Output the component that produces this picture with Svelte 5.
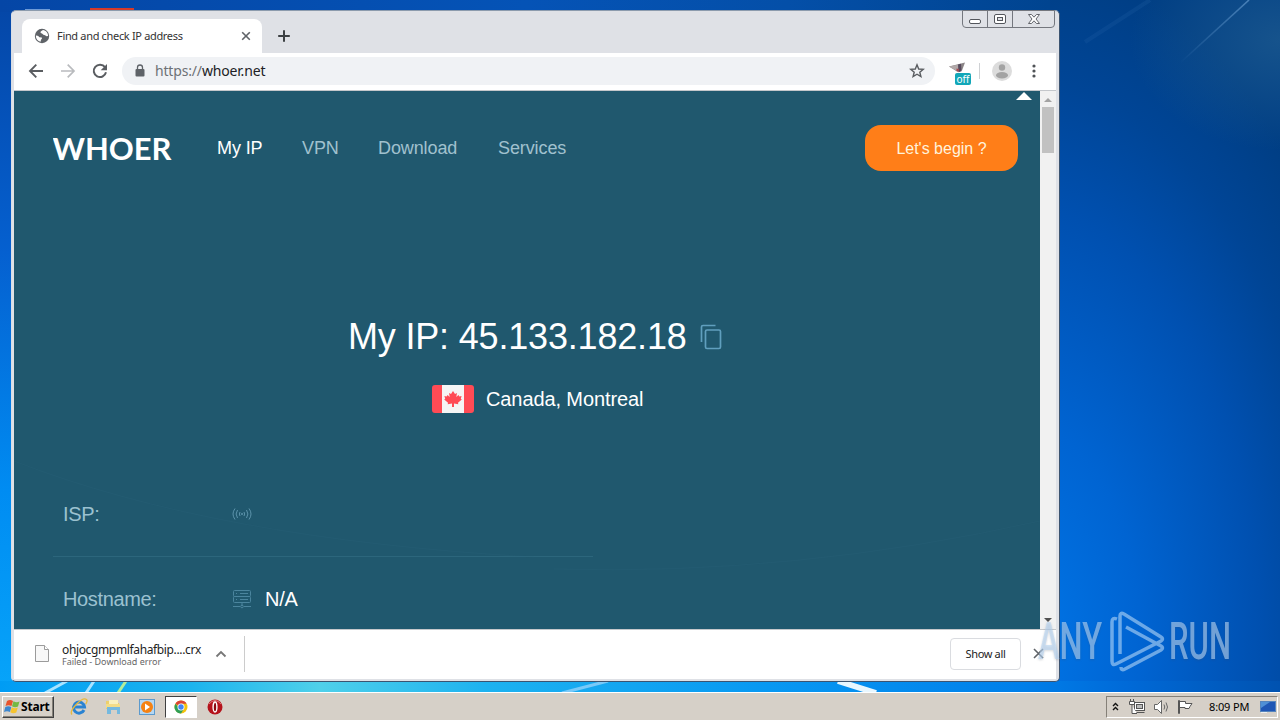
<script>
  const nav = [
    { label: "My IP", width: 45, active: true },
    { label: "VPN", width: 36 },
    { label: "Download", width: 80 },
    { label: "Services", width: 69 },
  ];
</script>

<div class="desktop">
  <svg class="wallpaper" viewBox="0 0 1280 720">
    <defs>
      <linearGradient id="sky" x1="0" y1="0" x2="0" y2="1">
        <stop offset="0" stop-color="#0546a6" />
        <stop offset="0.35" stop-color="#0560d0" />
        <stop offset="0.68" stop-color="#008cf2" />
        <stop offset="1" stop-color="#08a8fa" />
      </linearGradient>
      <linearGradient id="top" x1="0" y1="0" x2="1" y2="0">
        <stop offset="0" stop-color="#0546a6" />
        <stop offset="0.5" stop-color="#0553b6" />
        <stop offset="0.75" stop-color="#044fa8" />
        <stop offset="1" stop-color="#004490" />
      </linearGradient>
      <radialGradient id="side" gradientUnits="userSpaceOnUse" cx="0" cy="0" r="1" gradientTransform="translate(1020 640) scale(400 720)">
        <stop offset="0" stop-color="#0076e8" />
        <stop offset="0.3" stop-color="#0064d2" />
        <stop offset="0.6" stop-color="#0050b0" />
        <stop offset="0.78" stop-color="#004596" />
        <stop offset="0.95" stop-color="#003e84" />
      </radialGradient>
      <linearGradient id="base" x1="0" y1="0" x2="1" y2="0">
        <stop offset="0" stop-color="#009cf4" />
        <stop offset="0.15" stop-color="#1cb4ee" />
        <stop offset="0.25" stop-color="#4fd0ea" />
        <stop offset="0.38" stop-color="#1db2f0" />
        <stop offset="0.6" stop-color="#0898f2" />
        <stop offset="0.8" stop-color="#007fea" />
        <stop offset="0.88" stop-color="#006ad8" />
        <stop offset="1" stop-color="#0052b0" />
      </linearGradient>
      <radialGradient id="haze">
        <stop offset="0" stop-color="#2c6894" stop-opacity="0.5" />
        <stop offset="1" stop-color="#2c6894" stop-opacity="0" />
      </radialGradient>
      <linearGradient id="ray" gradientUnits="userSpaceOnUse" x1="1180" y1="63" x2="1250" y2="0">
        <stop offset="0" stop-color="#5d93c8" stop-opacity="0" />
        <stop offset="1" stop-color="#5d93c8" stop-opacity="0.75" />
      </linearGradient>
    </defs>
    <rect width="1280" height="720" fill="url(#sky)" />
    <rect width="1050" height="12" fill="url(#top)" />
    <rect x="1050" width="230" height="720" fill="url(#side)" />
    <ellipse cx="1280" cy="40" rx="150" ry="110" fill="url(#haze)" />
    <path d="M1180 63 1249 0" stroke="url(#ray)" stroke-width="1.6" />
    <path d="M1085 42 1150 0" stroke="#2a68ac" stroke-width="4" opacity="0.2" />
    <rect y="681" width="1280" height="12" fill="url(#base)" />
    <path d="M45 693 67 681M86 693 94 681" stroke="#a9e3ff" stroke-width="3" />
    <path d="M118 693 126 681" stroke="#b4ed9b" stroke-width="3" />
    <path d="M562 693 608 681" stroke="#79c9f8" stroke-width="3" />
    <path d="M838 681 876 693" stroke="#e8f7ff" stroke-width="6" />
    <rect x="90" y="8" width="44" height="3" fill="#d63a29" />
    <rect x="25" y="9" width="25" height="2" fill="#6f9bd7" />
  </svg>

  <div class="window">
    <div class="tabstrip">
      <div class="tab">
        <svg width="16" height="16" viewBox="0 0 16 16">
          <circle cx="8" cy="8" r="7.200" fill="#5f6368" />
          <path d="M1.800 7.500c2-.2 3 .8 3.600 1.800l2.400.3c.6.900-.2 1.600-.8 2.100l-.4 2.100C3.800 13.300 1.900 11 1.800 7.500zM9 2C8 3 6.500 2.900 6.500 4.200 6.500 5.400 8 5 8.600 6c.8 1.400 2.600.6 3.900 2.300l1.600-.3C14.200 5 12 2.500 9 2z" fill="#fff" />
        </svg>
        <span class="tab-title">Find and check IP address</span>
        <svg class="tab-close" width="10" height="10" viewBox="0 0 10 10">
          <path d="m1.200 1.200 7.600 7.600m0-7.600L1.200 8.800" stroke="#5f6368" stroke-width="1.600" />
        </svg>
      </div>
      <svg class="new-tab" width="14" height="14" viewBox="0 0 14 14">
        <path d="M7 1.200v11.600M1.200 7h11.600" stroke="#3c4043" stroke-width="2" />
      </svg>
      <div class="controls">
        <span>
          <svg width="24" height="16" viewBox="0 0 24 16">
            <rect x="6.500" y="8.500" width="11" height="4" rx="1.500" fill="#fff" stroke="#53565c" />
          </svg>
        </span>
        <span>
          <svg width="24" height="16" viewBox="0 0 24 16">
            <rect x="6.500" y="3.500" width="11" height="9" rx="1.500" fill="#fff" stroke="#53565c" />
            <rect x="9.500" y="6.500" width="5" height="3" fill="#dfe1e6" stroke="#53565c" />
          </svg>
        </span>
        <span class="wide">
          <svg width="24" height="16" viewBox="0 0 24 16">
            <path d="M6.500 3.500h3l2.500 2.700 2.500-2.700h3L14 8l3.500 4.500h-3L12 9.800l-2.500 2.700h-3L10 8z" fill="#fff" stroke="#53565c" stroke-width=".9" />
          </svg>
        </span>
      </div>
    </div>

    <div class="toolbar">
      <svg width="16" height="16" viewBox="0 0 16 16" fill="none" stroke="#5a5d61" stroke-width="1.900">
        <path d="M15 8H2M8.300 1.700 2 8l6.300 6.300" />
      </svg>
      <svg width="16" height="16" viewBox="0 0 16 16" fill="none" stroke="#b9bbbe" stroke-width="1.700">
        <path d="M1 8h13M7.700 1.700 14 8l-6.300 6.300" />
      </svg>
      <svg width="16" height="16" viewBox="0 0 16 16">
        <path d="M13 4.200A6.200 6.200 0 1 0 14 9.300" fill="none" stroke="#5a5d61" stroke-width="2" />
        <path d="M15 1v6.300H8.700z" fill="#5a5d61" />
      </svg>
      <div class="omnibox">
        <svg width="10" height="14" viewBox="0 0 10 14">
          <rect x=".5" y="5" width="9" height="7.500" rx="1" fill="#5f6368" />
          <path d="M2.500 5V3.500a2.500 2.500 0 0 1 5 0V5" fill="none" stroke="#5f6368" stroke-width="1.300" />
        </svg>
        <span class="url"><span class="scheme">https://</span>whoer.net</span>
        <svg class="star" width="16" height="16" viewBox="0 0 16 16">
          <path d="m8 1.800 1.700 4.200 4.600.3-3.500 2.900 1.100 4.400L8 11.200l-3.900 2.400 1.100-4.400-3.500-2.900 4.600-.3z" fill="none" stroke="#5a5d61" stroke-width="1.400" />
        </svg>
      </div>
      <div class="extension">
        <svg width="18" height="14" viewBox="0 0 18 14">
          <path d="M0 4.500 16 .5l-3 8-5 1z" fill="#8b8587" />
          <path d="m0 4.500 10-2-1 7z" fill="#b2a9a9" />
          <path d="m9 2.500 3-.7.500 7.500-3 1z" fill="#56495c" />
          <path d="m7.500 6.500 2.500.5-.5 3-2-1z" fill="#a64a51" />
        </svg>
        <span class="badge">off</span>
      </div>
      <i class="divider"></i>
      <svg class="avatar" width="20" height="20" viewBox="0 0 20 20">
        <circle cx="10" cy="10" r="10" fill="#dcdcdc" />
        <circle cx="10" cy="6.500" r="3.200" fill="#a3a3a3" />
        <ellipse cx="10" cy="14.200" rx="6" ry="3.200" fill="#a3a3a3" />
      </svg>
      <svg class="menu" width="4" height="14" viewBox="0 0 4 14" fill="#505357">
        <circle cx="2" cy="2" r="1.600" /><circle cx="2" cy="7" r="1.600" /><circle cx="2" cy="12" r="1.600" />
      </svg>
    </div>

    <div class="viewport">
      <main>
        <svg class="swirl" viewBox="0 0 1026 538" fill="none" stroke="#2a657b">
          <path d="M0 370Q200 448 520 466" opacity=".25" />
          <path d="M540 478Q780 485 1026 430" opacity=".25" />
        </svg>
        <svg class="up" width="16" height="8" viewBox="0 0 16 8"><path d="m0 8 8-8 8 8z" fill="#fff" /></svg>
        <header>
          <svg class="brand" width="119" height="40" viewBox="0 0 119 40">
            <text x="-0.5" y="31.500" textLength="119" lengthAdjust="spacingAndGlyphs">WHOER</text>
          </svg>
          <nav>
            {#each nav as item}
              <a href="#top" class:active={item.active} style="width: {item.width}px">{item.label}</a>
            {/each}
          </nav>
          <button class="begin">Let's begin ?</button>
        </header>
        <section class="hero">
          <h1>
            <span>My IP: 45.133.182.18</span>
            <svg width="22" height="26" viewBox="0 0 22 26" fill="none" stroke="#609fbe" stroke-width="1.700">
              <path d="M1.500 18V3q0-1.500 1.500-1.500h12.500" />
              <rect x="5.500" y="6" width="15" height="18.500" rx="1.500" />
            </svg>
          </h1>
          <div class="place">
            <svg width="42" height="28" viewBox="0 0 42 28">
              <rect width="42" height="28" rx="3" fill="#ff4b55" />
              <path d="M10 0h22v28H10z" fill="#f5f5f5" />
              <path d="m21 6 2 3 2-1-.7 4 2.200-2 .8 1.500 2.300-.5-.8 2.800 1 .7-3.800 3.200.3 1.500-4.300-.6V22h-2v-3.400l-4.300.6.3-1.500-3.800-3.200 1-.7-.8-2.800 2.300.5.800-1.500 2.200 2L17 8l2 1z" fill="#ff4b55" />
            </svg>
            <span>Canada, Montreal</span>
          </div>
        </section>
        <dl>
          <div class="row">
            <dt>ISP:</dt>
            <dd>
              <svg width="20" height="14" viewBox="0 0 20 14" fill="none" stroke="#5c93ab" stroke-width="1">
                <path d="M3 1.500q-4 5.500 0 11M5.500 3q-2.800 4 0 8M8 5q-1.200 2 0 4M12 5q1.200 2 0 4M14.500 3q2.800 4 0 8M17 1.500q4 5.500 0 11" />
                <circle cx="10" cy="7" r=".7" />
              </svg>
            </dd>
          </div>
          <div class="row">
            <dt>Hostname:</dt>
            <dd>
              <svg width="20" height="20" viewBox="0 0 20 20" fill="none" stroke="#4b859e" stroke-width="1">
                <rect x="1.500" y="1.500" width="17" height="6" rx="1" />
                <rect x="1.500" y="7.500" width="17" height="6" rx="1" />
                <path d="M4 4.500h1M4 10.500h1M8 4.500h8M8 10.500h8M10 13.500V17M1 17.500h7M12 17.500h7" />
                <circle cx="10" cy="17.500" r="1.300" />
              </svg>
              <span>N/A</span>
            </dd>
          </div>
        </dl>
      </main>
      <div class="scrollbar">
        <svg width="16" height="16" viewBox="0 0 16 16"><path d="m4 11 4-4 4 4z" fill="#a3a3a3" /></svg>
        <div class="thumb"></div>
        <svg class="down" width="16" height="16" viewBox="0 0 16 16"><path d="m4 5 4 4 4-4z" fill="#505050" /></svg>
      </div>
    </div>

    <div class="downloads">
      <svg width="14" height="17" viewBox="0 0 14 17">
        <path d="M.5.500h9l4 4v12H.5z" fill="#f8f8f8" stroke="#9b9b9b" />
        <path d="M9.500.500v4h4" fill="#fff" stroke="#9b9b9b" />
      </svg>
      <div class="file">
        <span class="name">ohjocgmpmlfahafbip....crx</span>
        <span class="status">Failed - Download error</span>
      </div>
      <svg class="chevron" width="12" height="8" viewBox="0 0 12 8">
        <path d="m1.500 6.500 4.500-4.500 4.500 4.500" fill="none" stroke="#777" stroke-width="1.800" />
      </svg>
      <button class="show-all">Show all</button>
      <svg class="close-bar" width="11" height="11" viewBox="0 0 11 11">
        <path d="m1 1 9 9m0-9-9 9" stroke="#5f6368" stroke-width="1.600" />
      </svg>
    </div>
  </div>

  <svg class="watermark" width="220" height="76" viewBox="0 0 220 76">
    <g class="letters">
      <text x="3" y="53" textLength="64" lengthAdjust="spacingAndGlyphs">ANY</text>
      <text x="134" y="53" textLength="62" lengthAdjust="spacingAndGlyphs">RUN</text>
    </g>
    <path d="M82 13q-5-2-5 3v39q0 5 4 3l45-23q3-2 0-4L89 8q-4-2-4 2v38M91 21l35 19q3 2 0 4L90 63q-4 2-4-2" fill="none" stroke="#b4d7f7" stroke-opacity=".6" stroke-width="3.500" />
  </svg>

  <div class="taskbar">
    <button class="start">
      <svg width="16" height="16" viewBox="0 0 16 16">
        <path d="M3 2q3-2 6 0L7.500 7q-3-1.500-6 0z" fill="#e8532c" />
        <path d="M9.500 2.300q3 1.600 6 .2L14 7.500q-3 1.400-6-.2z" fill="#75b943" />
        <path d="M1.300 8q3-1.700 6 0L6 13q-3-1.600-6 0z" fill="#3c87cf" />
        <path d="M7.800 8.300q3 1.600 6 .2L12.300 13.500q-3 1.400-6-.2z" fill="#f6c430" />
      </svg>
      <span>Start</span>
    </button>
    <div class="launch">
      <span class="app">
        <svg width="18" height="18" viewBox="0 0 18 18">
          <path d="M14 12A5.500 5.500 0 1 1 14.500 9H5" fill="none" stroke="#2a83d2" stroke-width="3" />
          <path d="M2 16.500C-1.500 13 12-1.500 16.500 1.500c1 1 .3 3-.8 4.500" fill="none" stroke="#e8b93b" stroke-width="1.300" />
        </svg>
      </span>
      <span class="app">
        <svg width="18" height="18" viewBox="0 0 18 18">
          <path d="M2 3h5l1 2h7v6H2z" fill="#edcf6c" />
          <path d="M5 2h9v6H5z" fill="#f8f0bd" />
          <path d="M2 6h14v4H2z" fill="#f2dc87" />
          <path d="M3 9h13v7h-3v-4H7v4H3z" fill="#75b9df" />
        </svg>
      </span>
      <span class="app">
        <svg width="18" height="18" viewBox="0 0 18 18">
          <rect x="1.500" y="1.500" width="15" height="15" fill="#b5d7f2" stroke="#5c9acd" />
          <circle cx="9" cy="9" r="6" fill="#f58213" />
          <path d="m7 5.500 5 3.500-5 3.500z" fill="#fff" />
        </svg>
      </span>
      <span class="app current">
        <svg width="16" height="16" viewBox="0 0 16 16">
          <circle cx="8" cy="8" r="6.500" fill="#f4c20d" />
          <path d="M8 8 2.400 4.700A6.500 6.500 0 0 1 13.600 4.700H8z" fill="#db4437" />
          <path d="M2.400 4.700A6.500 6.500 0 0 0 8 14.500l3-4.700-3 1.200z" fill="#2f9f57" />
          <circle cx="8" cy="8" r="3.500" fill="#fff" />
          <circle cx="8" cy="8" r="2.700" fill="#4285f4" />
        </svg>
      </span>
      <span class="app">
        <svg width="16" height="16" viewBox="0 0 16 16">
          <circle cx="8" cy="8" r="7.500" fill="#b5121b" />
          <path d="M2 5q6-7 12 0" fill="none" stroke="#e27a7d" />
          <ellipse cx="8" cy="8" rx="1.900" ry="5" fill="#8b080f" stroke="#fff" stroke-width="1.400" />
        </svg>
      </span>
    </div>
    <div class="tray">
      <svg class="more" width="7" height="9" viewBox="0 0 7 9" fill="none" stroke="#111" stroke-width="1.400">
        <path d="m1 4 2.500-2.500L6 4M1 8l2.500-2.500L6 8" />
      </svg>
      <svg class="net" width="16" height="16" viewBox="0 0 16 16" fill="#fff" stroke="#555">
        <rect x="5.500" y="3.500" width="10" height="8" /><rect x="7.500" y="5.500" width="6" height="4" fill="#bbb" />
        <path d="M7 13.500h8.500" />
        <path d="M.5 2.500h5v3h-5zM1.500 0v2M4.500 0v2M3 6v8.500h5" />
      </svg>
      <svg class="sound" width="17" height="16" viewBox="0 0 17 16" fill="#fff" stroke="#666">
        <path d="M1.500 5.500h3l4-4v13l-4-4h-3z" /><path d="M11 5.500q1.500 2.500 0 5M13 3.500q3 4.500 0 9" fill="none" />
      </svg>
      <svg class="flag" width="17" height="16" viewBox="0 0 17 16" fill="#fff" stroke="#555">
        <path d="M1.500 1.500h1v13h-1zM2.500 2.500h6v2h6.500l-2 3-1 2H8v-1H2.500z" />
      </svg>
      <span class="clock">8:09 PM</span>
      <svg class="show-desktop" width="16" height="14" viewBox="0 0 16 14">
        <rect x=".5" y="1.500" width="15" height="10" fill="#1f56b5" stroke="#5584bd" />
        <path d="M1 2h9L1 8z" fill="#4f8fd6" /><path d="M1 12h6v1H1z" fill="#eee" />
      </svg>
    </div>
  </div>
</div>

<style>
  :global(body) {
    overflow: hidden;
  }

  .desktop {
    position: relative;
    display: flex;
    flex-direction: column;
    justify-content: flex-end;
    width: 1280px;
    height: 720px;
    overflow: hidden;
    font-family: "Noto Sans", sans-serif;
    color: #222;
  }

  svg {
    display: block;
    flex-shrink: 0;
  }

  button {
    font: inherit;
    padding: 0;
    margin: 0;
  }

  .wallpaper {
    position: absolute;
    inset: 0;
  }

  .window {
    position: absolute;
    left: 11px;
    top: 10px;
    width: 1049px;
    height: 672px;
    box-sizing: border-box;
    display: flex;
    flex-direction: column;
    padding: 0 3px 2px 2px;
    border: 1px solid #3c5471;
    border-top-color: #8c9bad;
    border-left-color: #d8dde5;
    border-radius: 5px;
    background: #dfe1e6;
  }

  .tabstrip {
    height: 42px;
    display: flex;
    align-items: flex-start;
  }

  .tab {
    display: flex;
    align-items: center;
    width: 240px;
    height: 34px;
    box-sizing: border-box;
    margin: 8px 0 0 8px;
    padding: 0 11px 0 12px;
    border-radius: 8px 8px 0 0;
    background: #fff;
  }

  .tab-title {
    margin-left: 7px;
    padding-bottom: 2px;
    font-size: 11px;
    letter-spacing: -0.33px;
    white-space: nowrap;
    color: #333;
  }

  .tab-close {
    margin-left: auto;
  }

  .new-tab {
    margin: 18px 0 0 15px;
  }

  .controls {
    display: flex;
    margin: -1px 1px 0 auto;
    border: 1px solid #74777e;
    border-radius: 0 0 4px 4px;
  }

  .controls span {
    display: flex;
    justify-content: center;
    width: 24px;
    height: 16px;
  }

  .controls span + span {
    border-left: 1px solid #74777e;
  }

  .controls .wide {
    width: 41px;
  }

  .toolbar {
    display: flex;
    align-items: center;
    gap: 16px;
    height: 37px;
    padding: 0 0 1px 14px;
    box-sizing: border-box;
    border-bottom: 1px solid #c4c7cb;
    background: #fff;
    height: 38px;
  }

  .omnibox {
    display: flex;
    align-items: center;
    width: 813px;
    height: 28px;
    box-sizing: border-box;
    margin-left: -2px;
    padding: 0 10px 0 13px;
    border-radius: 14px;
    background: #f0f2f5;
  }

  .url {
    margin-left: 10px;
    padding-bottom: 1px;
    font-size: 14px;
    letter-spacing: -0.17px;
    color: #202124;
  }

  .scheme {
    color: #6d7176;
  }

  .star {
    margin-left: auto;
  }

  .extension {
    position: relative;
    margin-left: -2px;
    width: 22px;
    height: 18px;
  }

  .badge {
    position: absolute;
    left: 6px;
    top: 11px;
    width: 16px;
    height: 12px;
    border-radius: 2px;
    background: #12a7b8;
    color: #fff;
    font-size: 10px;
    line-height: 12px;
    text-align: center;
  }

  .divider {
    width: 1px;
    height: 16px;
    margin-left: -8px;
    background: #cfd1d4;
  }

  .avatar {
    margin-left: -4px;
  }

  .menu {
    margin-left: 4px;
  }

  .viewport {
    display: flex;
    height: 538px;
  }

  main {
    position: relative;
    width: 1026px;
    box-sizing: border-box;
    padding: 34px 22px 0 39px;
    overflow: hidden;
    background: #20586e;
    font-family: "Liberation Sans", Arial, sans-serif;
    color: #fff;
  }

  .swirl {
    position: absolute;
    inset: 0;
  }

  .up {
    position: absolute;
    right: 8px;
    top: 1px;
  }

  header {
    display: flex;
    align-items: center;
    height: 46px;
  }

  .brand text {
    font: bold 31px Lato, sans-serif;
    fill: #fff;
  }

  nav {
    display: flex;
    gap: 40px;
    margin: 1px auto 0 45px;
  }

  a {
    font-size: 18px;
    letter-spacing: -0.1px;
    white-space: nowrap;
    text-decoration: none;
    color: #a0c1ce;
  }

  a.active {
    color: #fff;
  }

  .begin {
    width: 153px;
    height: 46px;
    padding-top: 2px;
    border: 0;
    border-radius: 16px;
    background: #ff7e18;
    color: #fff3dc;
    font-size: 16px;
  }

  h1 {
    display: flex;
    align-items: center;
    height: 44px;
    margin: 144px 0 0 295px;
    font-size: 36px;
    font-weight: normal;
    letter-spacing: -0.18px;
    white-space: nowrap;
  }

  h1 span {
    width: 352px;
  }

  .place {
    display: flex;
    align-items: center;
    gap: 12px;
    height: 28px;
    margin: 26px 0 0 379px;
    font-size: 20px;
    letter-spacing: -0.1px;
  }

  dl {
    margin: 59px 0 0;
    width: 540px;
  }

  .row {
    display: flex;
    align-items: center;
    height: 84px;
    padding-left: 10px;
    border-bottom: 1px solid #2c667c;
  }

  dt {
    width: 169px;
    font-size: 20px;
    letter-spacing: -0.35px;
    color: #9bc1d0;
  }

  dd {
    display: flex;
    align-items: center;
    gap: 13px;
    margin: 0;
    font-size: 20px;
    letter-spacing: -0.3px;
  }

  .scrollbar {
    display: flex;
    flex-direction: column;
    width: 16px;
    background: #f1f1f1;
  }

  .thumb {
    width: 12px;
    height: 46px;
    margin: 0 auto;
    background: #c1c1c1;
  }

  .down {
    margin-top: auto;
  }

  .downloads {
    display: flex;
    align-items: center;
    flex: 1;
    padding: 0 12px 2px 21px;
    border-top: 1px solid #c6c8cb;
    background: #fff;
  }

  .file {
    display: flex;
    flex-direction: column;
    gap: 1px;
    width: 139px;
    margin-left: 13px;
    padding-top: 3px;
    white-space: nowrap;
  }

  .name {
    font-size: 12px;
    line-height: 12px;
    letter-spacing: -0.36px;
  }

  .status {
    font-size: 9px;
    line-height: 10px;
    color: #666;
  }

  .chevron {
    box-sizing: content-box;
    height: 8px;
    margin-left: 14px;
    padding: 14px 17px 14px 0;
    border-right: 1px solid #ccc;
  }

  .show-all {
    width: 71px;
    height: 32px;
    margin-left: auto;
    border: 1px solid #dadce0;
    border-radius: 4px;
    background: #fff;
    font-size: 11px;
    letter-spacing: -0.35px;
    color: #222;
  }

  .close-bar {
    margin-left: 12px;
  }

  .watermark {
    position: absolute;
    left: 1035px;
    top: 606px;
  }

  .letters {
    fill: #b8d6f4;
    fill-opacity: 0.6;
    filter: drop-shadow(0 1px 1px rgba(60, 70, 90, 0.35));
  }

  .watermark text {
    font: 500 52px Roboto, sans-serif;
  }

  .taskbar {
    position: relative;
    display: flex;
    align-items: center;
    height: 28px;
    box-sizing: border-box;
    padding: 0 2px;
    border-top: 1px solid #fff;
    background: #d6d0c8;
  }

  .start {
    display: flex;
    align-items: center;
    gap: 1px;
    width: 52px;
    height: 22px;
    padding-left: 1px;
    border: 1px solid;
    border-color: #fff #404040 #404040 #fff;
    box-shadow: inset -1px -1px #858078;
    background: #d6d0c8;
    color: #000;
    font-size: 12px;
    font-weight: bold;
    letter-spacing: -0.2px;
  }

  .launch {
    display: flex;
    gap: 2px;
    margin-left: 9px;
  }

  .app {
    display: flex;
    align-items: center;
    justify-content: center;
    width: 32px;
    height: 22px;
    box-sizing: border-box;
  }

  .current {
    border: 1px solid;
    border-color: #404040 #fff #fff #404040;
    background: #fff;
  }

  .tray {
    display: flex;
    align-items: center;
    width: 172px;
    height: 22px;
    box-sizing: border-box;
    margin-left: auto;
    padding-left: 5px;
    border: 1px solid;
    border-color: #858078 #fff #fff #858078;
  }

  .net {
    margin-left: 10px;
  }

  .sound {
    margin-left: 8px;
  }

  .flag {
    margin-left: 7px;
  }

  .clock {
    width: 40px;
    margin-left: 15px;
    font-size: 11px;
    letter-spacing: -0.15px;
    white-space: nowrap;
    color: #000;
  }

  .show-desktop {
    margin-left: 11px;
  }
</style>
